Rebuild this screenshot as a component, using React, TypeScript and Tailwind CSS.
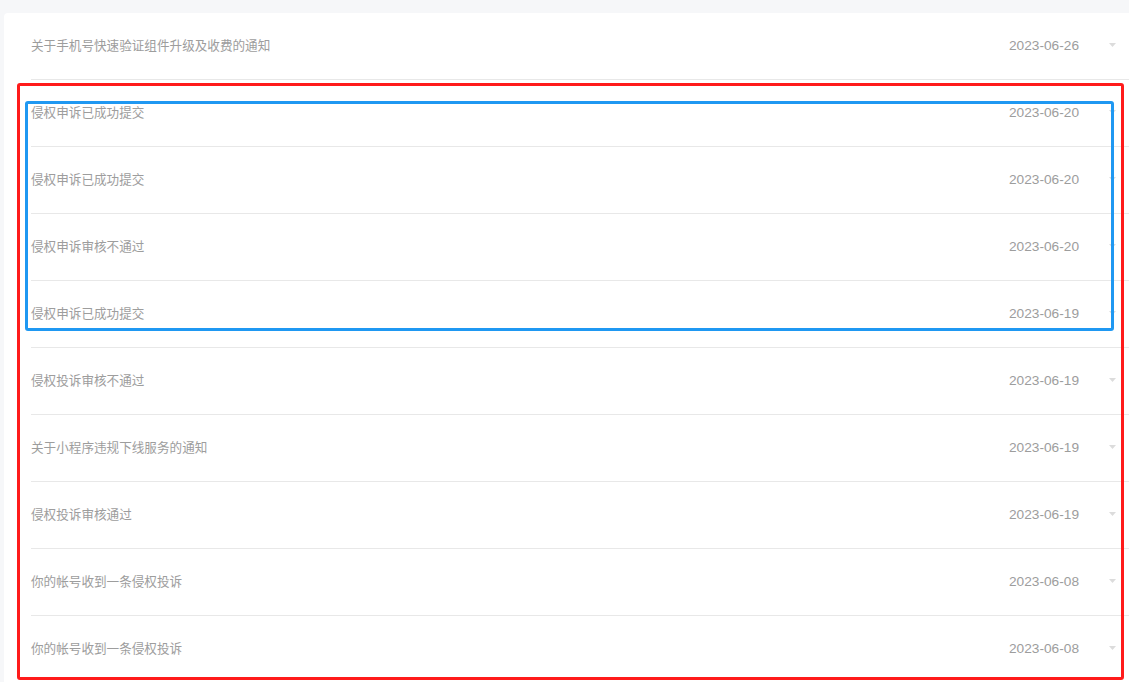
import React from "react";

const rows: [string, string][] = [
  ["关于手机号快速验证组件升级及收费的通知", "2023-06-26"],
  ["侵权申诉已成功提交", "2023-06-20"],
  ["侵权申诉已成功提交", "2023-06-20"],
  ["侵权申诉审核不通过", "2023-06-20"],
  ["侵权申诉已成功提交", "2023-06-19"],
  ["侵权投诉审核不通过", "2023-06-19"],
  ["关于小程序违规下线服务的通知", "2023-06-19"],
  ["侵权投诉审核通过", "2023-06-19"],
  ["你的帐号收到一条侵权投诉", "2023-06-08"],
  ["你的帐号收到一条侵权投诉", "2023-06-08"],
];

export default function App() {
  return (
    <div
      className="relative h-[682px] w-[1129px] overflow-hidden bg-[#f6f7f9]"
      style={{ fontFamily: '"Noto Sans CJK SC", "Noto Sans", sans-serif' }}
    >
      <div className="ml-[4px] mt-[13px] h-[700px] rounded-tl-[4px] bg-white pl-[27px]">
        {rows.map(([title, date], i) => (
          <div
            key={i}
            className="flex h-[67px] items-center border-b border-[#e8e8e8] text-[#9d9d9d]"
          >
            <div className="-mt-[1px] flex-1 text-[12.6px] leading-none">{title}</div>
            <div className="-mt-[1px] font-['Liberation_Sans',sans-serif] text-[13.7px] leading-none">
              {date}
            </div>
            <div className="flex w-[50px] justify-end pr-[13px]">
              <svg width="7" height="4" viewBox="0 0 7 4" className="-mt-[3px]">
                <path d="M0 0 L7 0 L3.5 4 Z" fill="#dcdcdc" />
              </svg>
            </div>
          </div>
        ))}
      </div>
      <div className="absolute left-[17px] top-[83px] h-[597px] w-[1107px] rounded-[3px] border-[3px] border-[#ff1b1b]" />
      <div className="absolute left-[25px] top-[101px] h-[230px] w-[1089px] rounded-[3px] border-[3px] border-[#1f98f2]" />
    </div>
  );
}
